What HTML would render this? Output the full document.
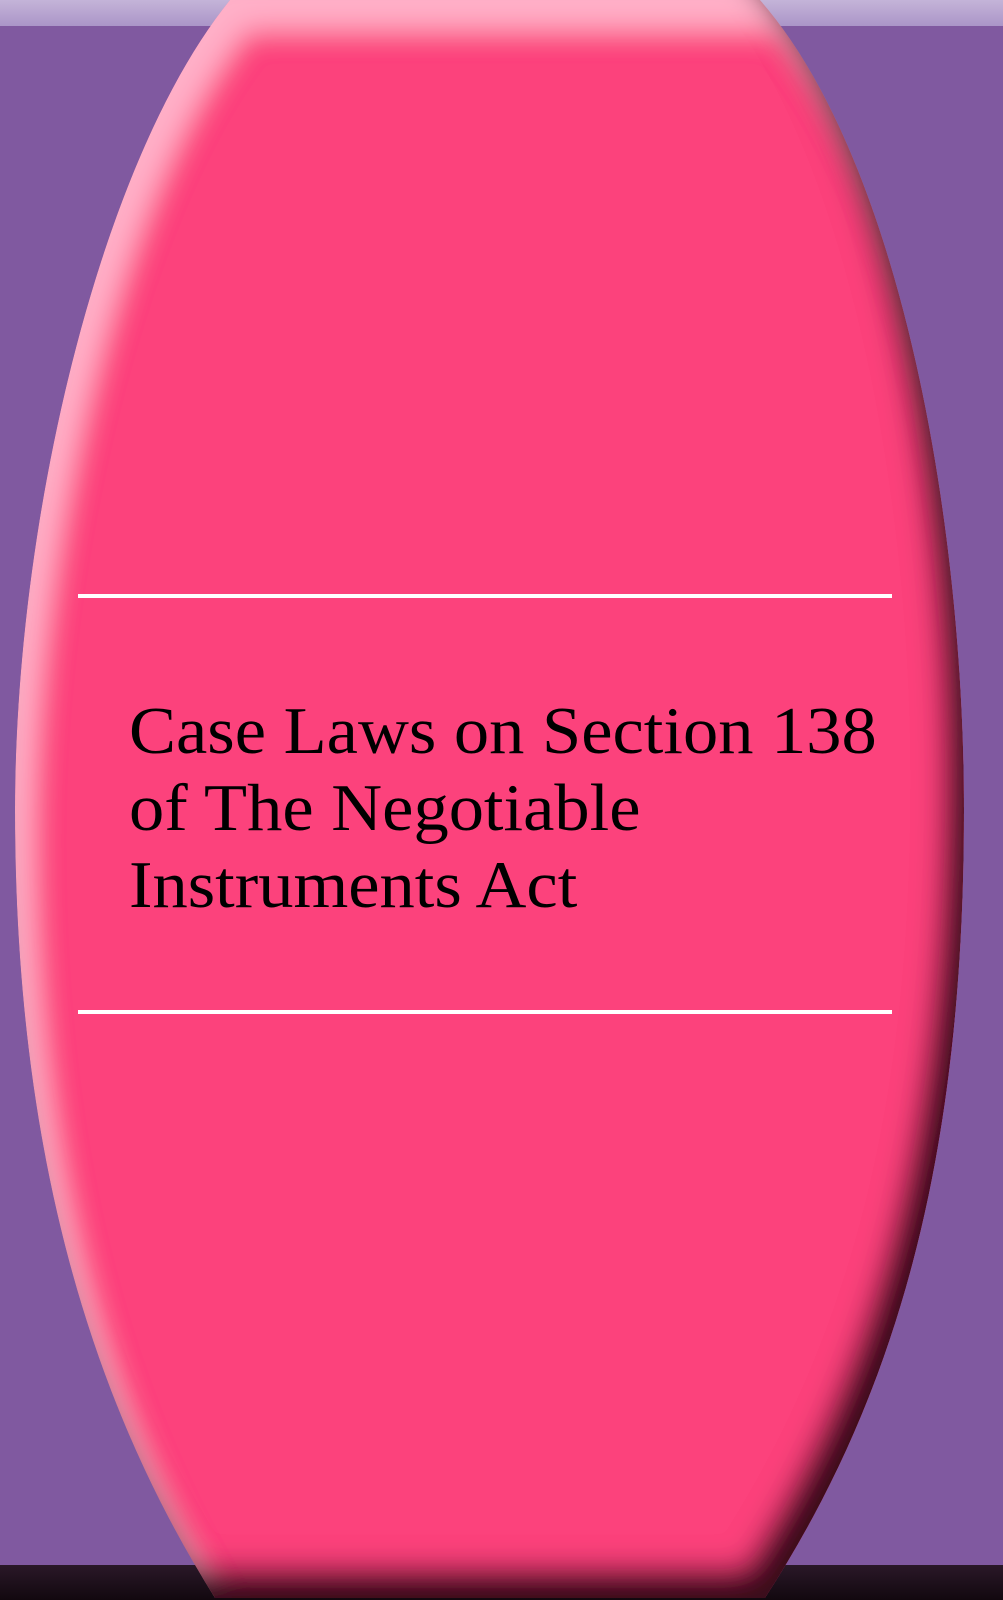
<!DOCTYPE html>
<html><head><meta charset="utf-8"><style>
html,body{margin:0;padding:0;width:1003px;height:1600px;overflow:hidden;background:#8059a0}
svg{position:absolute;left:0;top:0}
.t{position:absolute;left:129px;top:693px;font-family:"Liberation Serif",serif;font-size:67px;line-height:77px;color:#000;white-space:nowrap;transform:scaleX(1.052);transform-origin:0 0}
</style></head><body>
<svg width="1003" height="1600" viewBox="0 0 1003 1600">
<defs>
<linearGradient id="top" x1="0" y1="0" x2="0" y2="1"><stop offset="0" stop-color="#c4b4d8"/><stop offset="1" stop-color="#ab95c8"/></linearGradient>
<linearGradient id="bot" x1="0" y1="0" x2="0" y2="1"><stop offset="0" stop-color="#2a1828"/><stop offset="1" stop-color="#12080f"/></linearGradient>
<filter id="bev" x="-10%" y="-10%" width="120%" height="120%">
<feGaussianBlur in="SourceAlpha" stdDeviation="14" result="b"/>
<feOffset in="b" dx="18" dy="30" result="o1"/>
<feComposite in="SourceAlpha" in2="o1" operator="out" result="hl"/>
<feFlood flood-color="#ffb0c8" result="c1"/>
<feComposite in="c1" in2="hl" operator="in" result="hl2"/>
<feOffset in="b" dx="-20" dy="-30" result="o2"/>
<feComposite in="SourceAlpha" in2="o2" operator="out" result="sh"/>
<feFlood flood-color="#3a0c1e" result="c2"/>
<feComposite in="c2" in2="sh" operator="in" result="sh2"/>
<feMerge><feMergeNode in="SourceGraphic"/><feMergeNode in="hl2"/><feMergeNode in="sh2"/></feMerge>
<feComposite in2="SourceAlpha" operator="in"/>
</filter>
</defs>
<rect x="0" y="0" width="1003" height="26" fill="url(#top)"/>
<rect x="0" y="1565" width="1003" height="35" fill="url(#bot)"/>
<path filter="url(#bev)" fill="#fc437b" d="M230,0 L760,0 C900,160 964,520 964,810 C964,1150 900,1390 765,1598 L215,1598 C90,1400 15,1150 15,810 C15,520 100,160 230,0 Z"/>
<rect x="78" y="594" width="814" height="4" fill="#fff"/>
<rect x="78" y="1010" width="814" height="4" fill="#fff"/>
</svg>
<div class="t">Case Laws on Section 138<br>of The Negotiable<br>Instruments Act</div>
</body></html>
